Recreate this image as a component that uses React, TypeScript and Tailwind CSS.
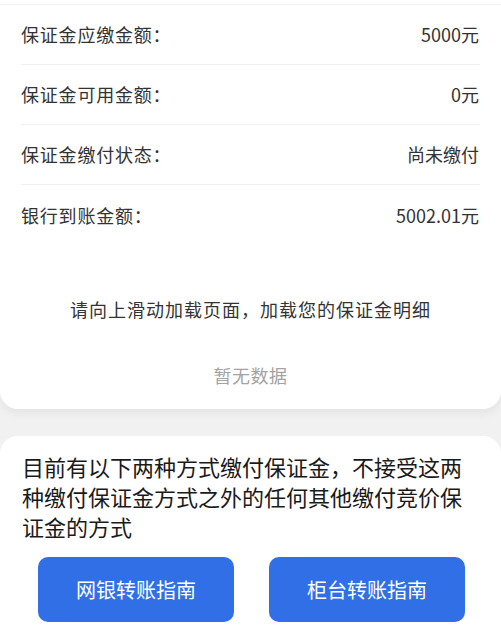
const font = { fontFamily: '"Noto Sans CJK SC", "Noto Sans", sans-serif' };

const rows = [
  { label: '保证金应缴金额：', value: '5000元' },
  { label: '保证金可用金额：', value: '0元' },
  { label: '保证金缴付状态：', value: '尚未缴付' },
  { label: '银行到账金额：', value: '5002.01元' },
];

export default function App() {
  return (
    <div className="w-[501px] h-[634px] overflow-hidden bg-[#f1f1f1] text-[#333]" style={font}>
      <div className="bg-white rounded-b-[18px] shadow-[0_4px_10px_rgba(0,0,0,0.06)] pt-[4px] h-[409px]">
        <div className="px-[21px] border-t border-[#efefef]">
          {rows.map((r, i) => (
            <div
              key={r.label}
              className={`flex items-center justify-between h-[60px] text-[18px] ${i < rows.length - 1 ? 'border-b border-[#efefef]' : ''}`}
            >
              <span className="tracking-[0.8px]">{r.label}</span>
              <span className="pr-[1px]">{r.value}</span>
            </div>
          ))}
        </div>
        <div className="mt-[51px] text-center text-[18px] tracking-[1px]">请向上滑动加载页面，加载您的保证金明细</div>
        <div className="mt-[39px] text-center text-[18px] text-[#a3a3a3] tracking-[0.5px]">暂无数据</div>
      </div>
      <div className="mt-[27px] bg-white rounded-t-[18px] h-[260px] px-[22px] pt-[15px]">
        <p className="text-[22px] leading-[30px] text-[#1a1a1a]">
          目前有以下两种方式缴付保证金，不接受这两种缴付保证金方式之外的任何其他缴付竞价保证金的方式
        </p>
        <div className="flex justify-between pl-[16px] pr-[14px] mt-[16px]">
          <button className="w-[196px] h-[65px] rounded-[10px] bg-[#306fe6] text-white text-[20px]">网银转账指南</button>
          <button className="w-[196px] h-[65px] rounded-[10px] bg-[#306fe6] text-white text-[20px]">柜台转账指南</button>
        </div>
      </div>
    </div>
  );
}
